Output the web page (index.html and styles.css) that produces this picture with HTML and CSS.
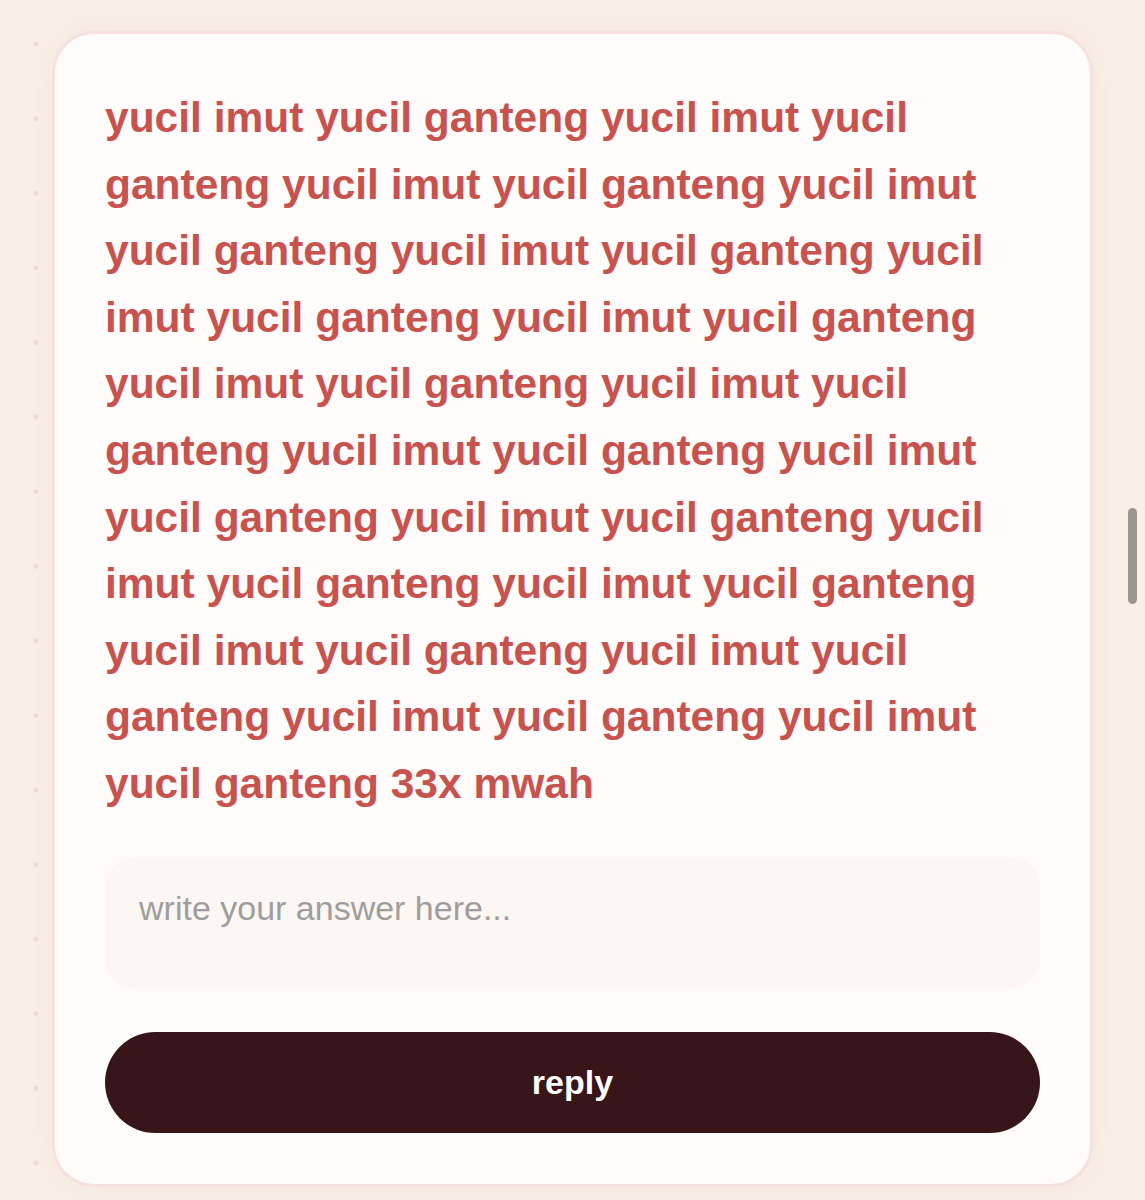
FILE: index.html
```html
<!DOCTYPE html>
<html lang="id">
<head>
<meta charset="utf-8">
<title>yucil</title>
<link rel="stylesheet" href="styles.css">
</head>
<body>
<main class="card">
  <p class="message">yucil imut yucil ganteng yucil imut yucil ganteng yucil imut yucil ganteng yucil imut yucil ganteng yucil imut yucil ganteng yucil imut yucil ganteng yucil imut yucil ganteng yucil imut yucil ganteng yucil imut yucil ganteng yucil imut yucil ganteng yucil imut yucil ganteng yucil imut yucil ganteng yucil imut yucil ganteng yucil imut yucil ganteng yucil imut yucil ganteng yucil imut yucil ganteng yucil imut yucil ganteng yucil imut yucil ganteng 33x mwah</p>
  <form class="answer-form">
    <textarea class="answer" placeholder="write your answer here..."></textarea>
    <button type="button" class="reply">reply</button>
  </form>
</main>
<div class="scrollbar"></div>
</body>
</html>
```

FILE: styles.css
```css
html, body {
  margin: 0;
  padding: 0;
}
body {
  min-height: 1200px;
  background-color: #f8efe6;
  background-image: radial-gradient(circle, #ecdcd5 2.2px, transparent 2.8px);
  background-size: 75px 74.6px;
  background-position: -1.5px 6.7px;
  background-repeat: repeat-y;
  font-family: "Liberation Sans", Arial, Helvetica, sans-serif;
  padding: 31px 52px 13px;
  box-sizing: border-box;
  overflow: hidden;
}
.card {
  background: #fefcfb;
  border: 3px solid #f5e1e0;
  border-radius: 42px;
  padding: 51px 50px 51px;
  box-shadow: 0 0 22px rgba(238, 222, 212, 0.45);
}
.message {
  margin: 0;
  color: #c8524e;
  font-weight: 700;
  font-size: 42.5px;
  line-height: 66.6px;
}
.answer-form {
  display: flex;
  flex-direction: column;
  gap: 43px;
  margin-top: 39px;
}
.answer {
  display: block;
  box-sizing: border-box;
  width: 100%;
  height: 132px;
  border: none;
  border-radius: 30px;
  background: #fcf7f3;
  padding: 31px 34px;
  font-family: "Liberation Sans", Arial, Helvetica, sans-serif;
  font-size: 34px;
  line-height: 1.2;
  color: #333;
  resize: none;
  outline: none;
}
.answer::placeholder {
  color: #a09e9c;
}
.reply {
  height: 101px;
  border: none;
  border-radius: 51px;
  background: #381519;
  color: #ffffff;
  font-family: "Liberation Sans", Arial, Helvetica, sans-serif;
  font-weight: 700;
  font-size: 34px;
  padding: 0;
}
.scrollbar {
  position: fixed;
  top: 508px;
  left: 1128px;
  width: 9px;
  height: 96px;
  border-radius: 5px;
  background: #9b9692;
}
```
